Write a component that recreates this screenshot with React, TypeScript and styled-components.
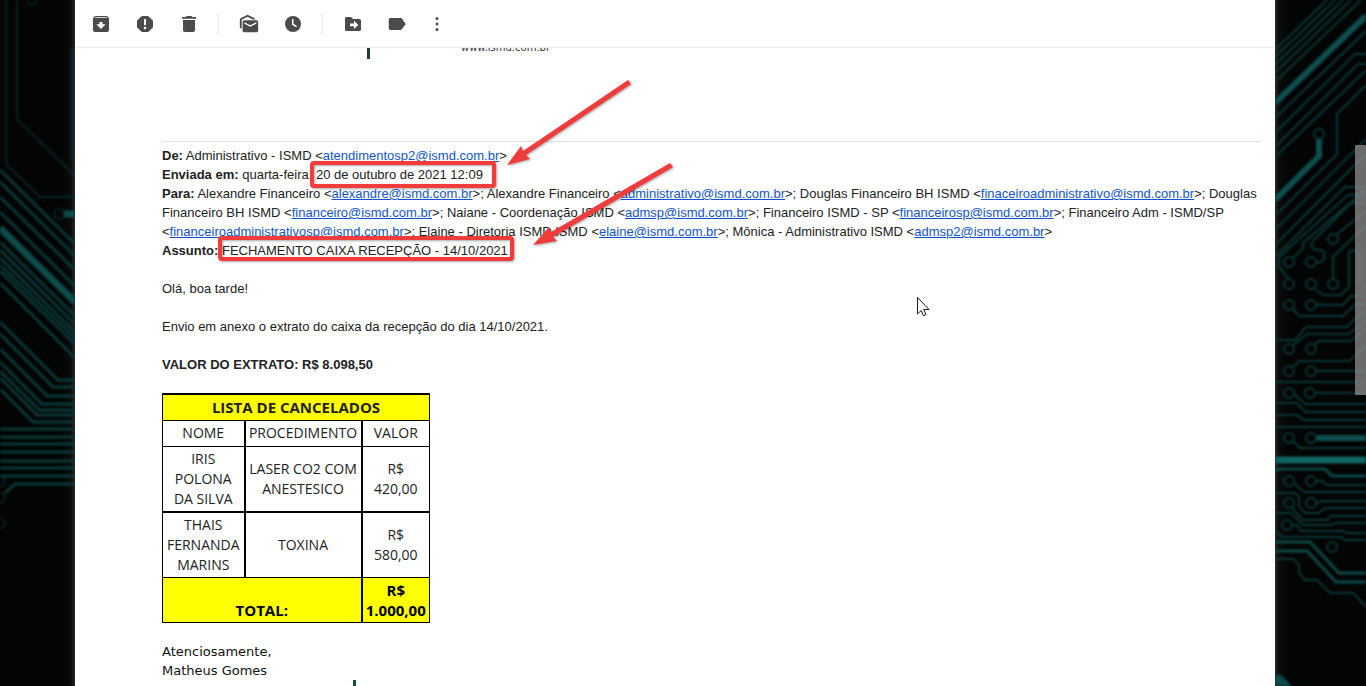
import React from "react";
import styled, { createGlobalStyle } from "styled-components";

const GlobalStyle = createGlobalStyle`
  * { box-sizing: border-box; }
  body { margin: 0; background: #030404; }
`;

const Page = styled.div`
  display: flex;
  height: 100vh;
  overflow: hidden;
  color: #222;
  font: 13px/19px "Liberation Sans", Arial, sans-serif;
`;

const Backdrop = styled.aside<{ $side: "left" | "right" }>`
  position: relative;
  flex: 0 0 ${(p) => (p.$side === "left" ? 75 : 91)}px;
  overflow: hidden;
  background: linear-gradient(to ${(p) => p.$side}, #2a2a2a, #0a0b0b 4px, #030404 14px);
`;

const Circuit = styled.svg`
  display: block;
  fill: none;
  stroke: #0a3838;
  stroke-width: 2;
  filter: blur(1px);
`;

const ScrollThumb = styled.div`
  position: absolute;
  top: 145px;
  right: 0;
  width: 11px;
  height: 250px;
  background: rgba(134, 134, 134, 0.8);
`;

const Mail = styled.main`
  flex: 1;
  min-width: 0;
  display: flex;
  flex-direction: column;
  background: #fff;
`;

const Toolbar = styled.header`
  flex: none;
  display: flex;
  align-items: center;
  height: 48px;
  padding-left: 16px;
  border-bottom: 1px solid #eceeee;
`;

const ToolGroup = styled.div<{ $divided?: boolean }>`
  display: flex;
  gap: 24px;
  height: 20px;
  ${(p) => p.$divided && "margin-left: 19px; padding-left: 20px; border-left: 1px solid #e8eaea;"}
`;

const ToolButton = styled.button`
  display: flex;
  align-items: center;
  justify-content: center;
  width: 20px;
  height: 20px;
  padding: 0;
  border: 0;
  background: none;
  color: #4b4b4b;
  svg { flex: none; fill: currentColor; }
`;

const MoreButton = styled(ToolButton)`
  margin-left: 20px;
`;

const Scroller = styled.div`
  position: relative;
  flex: 1;
  min-height: 0;
  overflow: hidden;
  padding: 0 15px 0 87px;
`;

const Signature = styled.div`
  display: flex;
  gap: 91px;
  height: 93px;
  padding-left: 205px;
`;

const SignatureBar = styled.div`
  width: 3px;
  height: 11px;
  background: #1f3f38;
`;

const Website = styled.span`
  height: 12px;
  margin-top: -6px;
  color: #333;
  font: 10px/12px "DejaVu Sans", Verdana, sans-serif;
`;

const Message = styled.article`
  border-top: 1px solid #dfe1e1;
  padding-top: 4px;
`;

const Headers = styled.div`
  margin-bottom: 19px;
`;

const MailLink = styled.a`
  color: #1155cc;
  text-decoration: underline;
`;

const Paragraph = styled.p`
  margin: 0 0 19px;
`;

const Highlight = styled.span`
  position: relative;
  &::after {
    content: "";
    position: absolute;
    inset: -6px -13px -6px -6px;
    border: 4px solid #f23c3c;
    border-radius: 4px;
    filter: drop-shadow(1px 1px 1px rgba(0, 0, 0, 0.35));
  }
`;

const SubjectHighlight = styled(Highlight)`
  &::after { inset: -7px -6px -3px -4px; }
`;

const Cancelled = styled.table`
  width: 267px;
  table-layout: fixed;
  border-collapse: collapse;
  margin-bottom: 19px;
  border-top: 2px solid #000;
  color: #222;
  font: 14px/20px "Comic Sans MS", "Open Sans", sans-serif;
  text-align: center;
`;

const Cell = styled.td<{ $thick?: boolean; $bottom?: boolean }>`
  padding: 2px 0;
  border: 1px solid #000;
  border-left-width: ${(p) => (p.$thick ? 2 : 1)}px;
  vertical-align: ${(p) => (p.$bottom ? "bottom" : "middle")};
`;

const Row = styled.tr<{ $total?: boolean; $heavy?: boolean; $heading?: boolean }>`
  ${(p) => p.$total && "background: #ff0; color: #000; font-size: 15px; font-weight: bold;"}
  ${(p) => p.$heavy && `${Cell} { border-bottom-width: 2px; }`}
  ${(p) => p.$heading && `${Cell} { padding-bottom: 3px; }`}
`;

const TitleCell = styled.th`
  padding: 2px 0 3px;
  border: 1px solid #000;
  border-top-width: 2px;
  background: #ff0;
  font-size: 15px;
`;

const Closing = styled.footer`
  color: #111;
  font: 13px/19px "DejaVu Sans", Verdana, sans-serif;
`;

const ClosingBar = styled(SignatureBar)`
  margin-left: 191px;
  background: #125038;
`;

const Arrows = styled.svg`
  position: absolute;
  left: 425px;
  top: 22px;
  pointer-events: none;
  fill: #f23c3c;
  filter: drop-shadow(1px 1px 1px rgba(0, 0, 0, 0.35));
`;

const Pointer = styled.svg`
  position: absolute;
  left: 842px;
  top: 249px;
  pointer-events: none;
`;

const LEFT_TRACES = [
  "M6 0V164L40 197H75", "M17 0V119L75 176",
  "M0 170L75 244", "M0 182L75 256", "M0 197L75 270", "M0 212L75 286",
  "M0 242L75 316", "M0 250L75 324", "M0 258L75 332", "M0 265L75 338", "M0 271L75 344", "M0 283L75 358",
  "M0 322L58 380H75", "M0 334L53 387H75", "M0 349L47 396H75", "M0 362L42 404H75",
  "M0 371L39 410H75", "M0 378L37 415H75", "M0 389L33 422H75",
  "M0 429H75", "M0 437H75", "M0 444H75", "M0 452H75", "M0 461H75", "M0 468H75", "M0 476H75",
  "M5 493L15 484H75",
];

const RIGHT_TRACES = [
  "M0 50L52 0", "M0 57L60 0", "M0 65L68 0", "M0 73L76 0", "M0 82L86 0",
  "M0 118L91 31", "M0 133L80 54H91", "M0 147L83 64H91", "M0 157L91 70",
  "M91 85L62 114V154L0 216", "M0 230L91 139", "M0 245L91 154",
  "M2 255L70 187H91", "M91 195H73L4 257V267L13 278", "M91 203H75L28 243V248L18 258",
  "M41 262H46L49 259V252L46 250H40L36 246L38 241L91 188", "M61 235L91 211", "M58 279V257L91 225",
  "M40 289L48 295H66L74 287V252L79 250L84 253V283L91 287",
  "M18 309L24 316H68L80 305H91", "M41 305H68L76 296H91",
  "M0 340H20L31 327H72L84 315H91", "M18 345L32 334H74L91 320", "M39 345L44 341H76L91 328",
  "M18 367L24 361H75L91 345", "M41 371H91", "M0 382H91", "M18 393L30 404H91", "M41 393H91",
  "M0 403H22L30 412H91", "M0 415H22L28 420H91", "M0 427H91", "M18 441L25 448H91",
  "M19 483L29 492H91", "M41 481H47L52 485H91",
  "M0 493H20L24 497V506L30 513H44L50 508H91", "M17 508L28 520H52L56 516H91", "M41 503H43L47 501H91",
  "M0 513H16L28 525H56L60 523H91", "M17 525H22L26 531H68L72 533H91", "M0 530L7 537H66L70 540H91",
  "M0 559H18L24 565V573L30 580H42L55 593H78L91 607",
];

const RIGHT_PADS = [
  [44, 134], [14, 262], [36, 262], [58, 239], [14, 284], [36, 284], [58, 284], [14, 305], [36, 305],
  [14, 349], [36, 349], [14, 371], [36, 371], [14, 393], [35, 393], [14, 438], [36, 438],
  [14, 481], [36, 481], [14, 503], [36, 503], [12, 525], [57, 547],
];

const LEFT_PADS = [[32, 0], [59, 214], [0, 481], [0, 498], [0, 523]];

const recipients: [string, string][] = [
  ["Alexandre Financeiro", "alexandre@ismd.com.br"],
  ["Alexandre Financeiro", "administrativo@ismd.com.br"],
  ["Douglas Financeiro BH ISMD", "finaceiroadministrativo@ismd.com.br"],
  ["Douglas Financeiro BH ISMD", "financeiro@ismd.com.br"],
  ["Naiane - Coordenação ISMD", "admsp@ismd.com.br"],
  ["Financeiro ISMD - SP", "financeirosp@ismd.com.br"],
  ["Financeiro Adm - ISMD/SP", "financeiroadministrativosp@ismd.com.br"],
  ["Elaine - Diretoria ISMD ISMD", "elaine@ismd.com.br"],
  ["Mônica - Administrativo ISMD", "admsp2@ismd.com.br"],
];

const Address = ({ email }: { email: string }) => (
  <>&lt;<MailLink href={`mailto:${email}`}>{email}</MailLink>&gt;</>
);

const Pads = ({ points }: { points: number[][] }) => (
  <>{points.map(([x, y]) => <circle key={`${x}-${y}`} cx={x} cy={y} r="5" />)}</>
);

export default function App() {
  return (
    <Page>
      <GlobalStyle />
      <Backdrop $side="left">
        <Circuit width="75" height="686" viewBox="0 0 75 686" aria-hidden="true">
          <g opacity="0.6"><path d={LEFT_TRACES.slice(0, 2).join("")} /></g>
          <path d={LEFT_TRACES.slice(2).join("")} strokeWidth="3" />
          <path d="M72 48V160" strokeWidth="4" opacity="0.4" />
          <path d="M0 228L75 302" strokeWidth="7" stroke="#0d4c4b" />
          <path d="M64 214H75" strokeWidth="7" stroke="#0d4c4b" />
          <g opacity="0.6"><Pads points={LEFT_PADS} /></g>
        </Circuit>
      </Backdrop>

      <Mail>
        <Toolbar>
          <ToolGroup>
            <ToolButton aria-label="Arquivar">
              <svg width="20" height="20" viewBox="0 0 20 20">
                <path fillRule="evenodd" d="M4 2H16L18 4V16Q18 18 16 18H4Q2 18 2 16V4ZM4.300 3.200L3.500 4H16.500L15.700 3.200ZM8.500 8V10.300H5.300L10 15L14.700 10.300H11.500V8Z" />
              </svg>
            </ToolButton>
            <ToolButton aria-label="Denunciar spam">
              <svg width="20" height="20" viewBox="0 0 20 20">
                <path fillRule="evenodd" d="M7.300 2H12.700Q13.300 2 13.700 2.400L17.600 6.300Q18 6.700 18 7.300V12.700Q18 13.300 17.600 13.700L13.700 17.600Q13.300 18 12.700 18H7.300Q6.700 18 6.300 17.600L2.400 13.700Q2 13.300 2 12.700V7.300Q2 6.700 2.400 6.300L6.300 2.400Q6.700 2 7.300 2ZM9 5V11.200H11V5ZM10 12.700A1.300 1.300 0 1 0 10 15.300A1.300 1.300 0 1 0 10 12.700Z" />
              </svg>
            </ToolButton>
            <ToolButton aria-label="Excluir">
              <svg width="20" height="20" viewBox="0 0 20 20">
                <path d="M7.500 2H12.500L13.200 3H17V4.700H3V3H6.800ZM4 6H16V16Q16 18 14 18H6Q4 18 4 16Z" />
              </svg>
            </ToolButton>
          </ToolGroup>
          <ToolGroup $divided>
            <ToolButton aria-label="Marcar como não lida">
              <svg width="22" height="22" viewBox="0 0 24 24">
                <path d="M18.830 7h-2.600L10.500 4 4 7.400V17c-1.100 0-2-.9-2-2V7.170c0-.53.32-1.090.8-1.340L10.500 2l7.540 3.830c.43.230.73.700.79 1.170zM20 8H7c-1.100 0-2 .9-2 2v9c0 1.100.9 2 2 2h13c1.100 0 2-.9 2-2v-9c0-1.100-.9-2-2-2zm0 3.670L13.500 15 7 11.670V10l6.500 3.330L20 10v1.670z" />
              </svg>
            </ToolButton>
            <ToolButton aria-label="Adiar">
              <svg width="20" height="20" viewBox="0 0 20 20">
                <path fillRule="evenodd" d="M10 2A8 8 0 1 0 10 18A8 8 0 1 0 10 2ZM9 5H10.500V9.800L14 12L13.200 13.300L9 10.700Z" />
              </svg>
            </ToolButton>
          </ToolGroup>
          <ToolGroup $divided>
            <ToolButton aria-label="Mover para">
              <svg width="20" height="20" viewBox="0 0 20 20">
                <path fillRule="evenodd" d="M3.600 3H8L10 5H16.400Q18 5 18 6.600V15.400Q18 17 16.400 17H3.600Q2 17 2 15.400V4.600Q2 3 3.600 3ZM11 6.700V9.500H7V12.300H11V15.100L15.300 10.900Z" />
              </svg>
            </ToolButton>
            <ToolButton aria-label="Marcadores">
              <svg width="22" height="22" viewBox="0 0 24 24">
                <path d="M17.200 5.840C16.800 5.330 16.300 5.500 15.600 5.500L5 5.510C3.900 5.510 3 6.200 3 7.300v9.400c0 1.100.9 1.800 2 1.800L15.600 18.500c.67 0 1.270-.2 1.630-.7L21.500 12z" />
              </svg>
            </ToolButton>
          </ToolGroup>
          <MoreButton aria-label="Mais">
            <svg width="20" height="20" viewBox="0 0 20 20">
              <circle cx="10" cy="4.500" r="1.500" /><circle cx="10" cy="10" r="1.500" /><circle cx="10" cy="15.500" r="1.500" />
            </svg>
          </MoreButton>
        </Toolbar>

        <Scroller>
          <Signature>
            <SignatureBar />
            <Website>www.ismd.com.br</Website>
          </Signature>
          <Message>
            <Headers>
              <div><b>De:</b> Administrativo - ISMD <Address email="atendimentosp2@ismd.com.br" /></div>
              <div><b>Enviada em:</b> quarta-feira, <Highlight>20 de outubro de 2021 12:09</Highlight></div>
              <div>
                <b>Para:</b>{" "}
                {recipients.map(([name, email], i) => (
                  <React.Fragment key={email}>
                    {name} <Address email={email} />{i < recipients.length - 1 && "; "}
                  </React.Fragment>
                ))}
              </div>
              <div><b>Assunto:</b> <SubjectHighlight>FECHAMENTO CAIXA RECEPÇÃO - 14/10/2021</SubjectHighlight></div>
            </Headers>
            <Paragraph>Olá, boa tarde!</Paragraph>
            <Paragraph>Envio em anexo o extrato do caixa da recepção do dia 14/10/2021.</Paragraph>
            <Paragraph><b>VALOR DO EXTRATO: R$ 8.098,50</b></Paragraph>
            <Cancelled>
              <colgroup>
                <col width="82" /><col width="117" /><col width="68" />
              </colgroup>
              <thead>
                <tr><TitleCell colSpan={3}>LISTA DE CANCELADOS</TitleCell></tr>
              </thead>
              <tbody>
                <Row $heading><Cell>NOME</Cell><Cell $thick>PROCEDIMENTO</Cell><Cell $thick>VALOR</Cell></Row>
                <Row $heavy>
                  <Cell>IRIS<br />POLONA<br />DA SILVA</Cell>
                  <Cell $thick>LASER CO2 COM ANESTESICO</Cell>
                  <Cell $thick>R$<br />420,00</Cell>
                </Row>
                <Row>
                  <Cell>THAIS<br />FERNANDA<br />MARINS</Cell>
                  <Cell $thick>TOXINA</Cell>
                  <Cell $thick>R$<br />580,00</Cell>
                </Row>
                <Row $total>
                  <Cell colSpan={2} $bottom>TOTAL:</Cell>
                  <Cell $thick $bottom>R$<br />1.000,00</Cell>
                </Row>
              </tbody>
            </Cancelled>
            <Closing>
              <div>Atenciosamente,</div>
              <div>Matheus Gomes</div>
              <ClosingBar />
            </Closing>
          </Message>
          <Arrows width="180" height="190" viewBox="500 70 180 190" aria-hidden="true">
            <path d="M507 165L521 146L523 151L628 80L631 84L526 155L530 159Z" />
            <path d="M533 245L549 227L551 232L670 163L673 167L553 237L557 241Z" />
          </Arrows>
          <Pointer width="14" height="22" viewBox="0 0 14 22" aria-hidden="true">
            <path d="M.5.5V17L4.200 13.500L6.500 18.800L9 17.700L6.700 12.500H12Z" fill="#fff" stroke="#1b1b2b" />
          </Pointer>
        </Scroller>
      </Mail>

      <Backdrop $side="right">
        <Circuit width="91" height="686" viewBox="0 0 91 686" aria-hidden="true">
          <path d={RIGHT_TRACES.join("")} />
          <path d="M0 103L91 16M44 139V156L0 200M41 438H91" strokeWidth="6" stroke="#0d4f4e" />
          <path d="M0 460H91" strokeWidth="7" stroke="#106463" />
          <path d="M0 542H35L64 573H91M0 551H32L61 582H91M0 472L3 469H50L57 476H91" strokeWidth="3" stroke="#0c4a49" />
          <Pads points={RIGHT_PADS} />
          <path d="M0 675H6L17 686H0Z" fill="#0d4c4b" stroke="none" />
        </Circuit>
        <ScrollThumb />
      </Backdrop>
    </Page>
  );
}
